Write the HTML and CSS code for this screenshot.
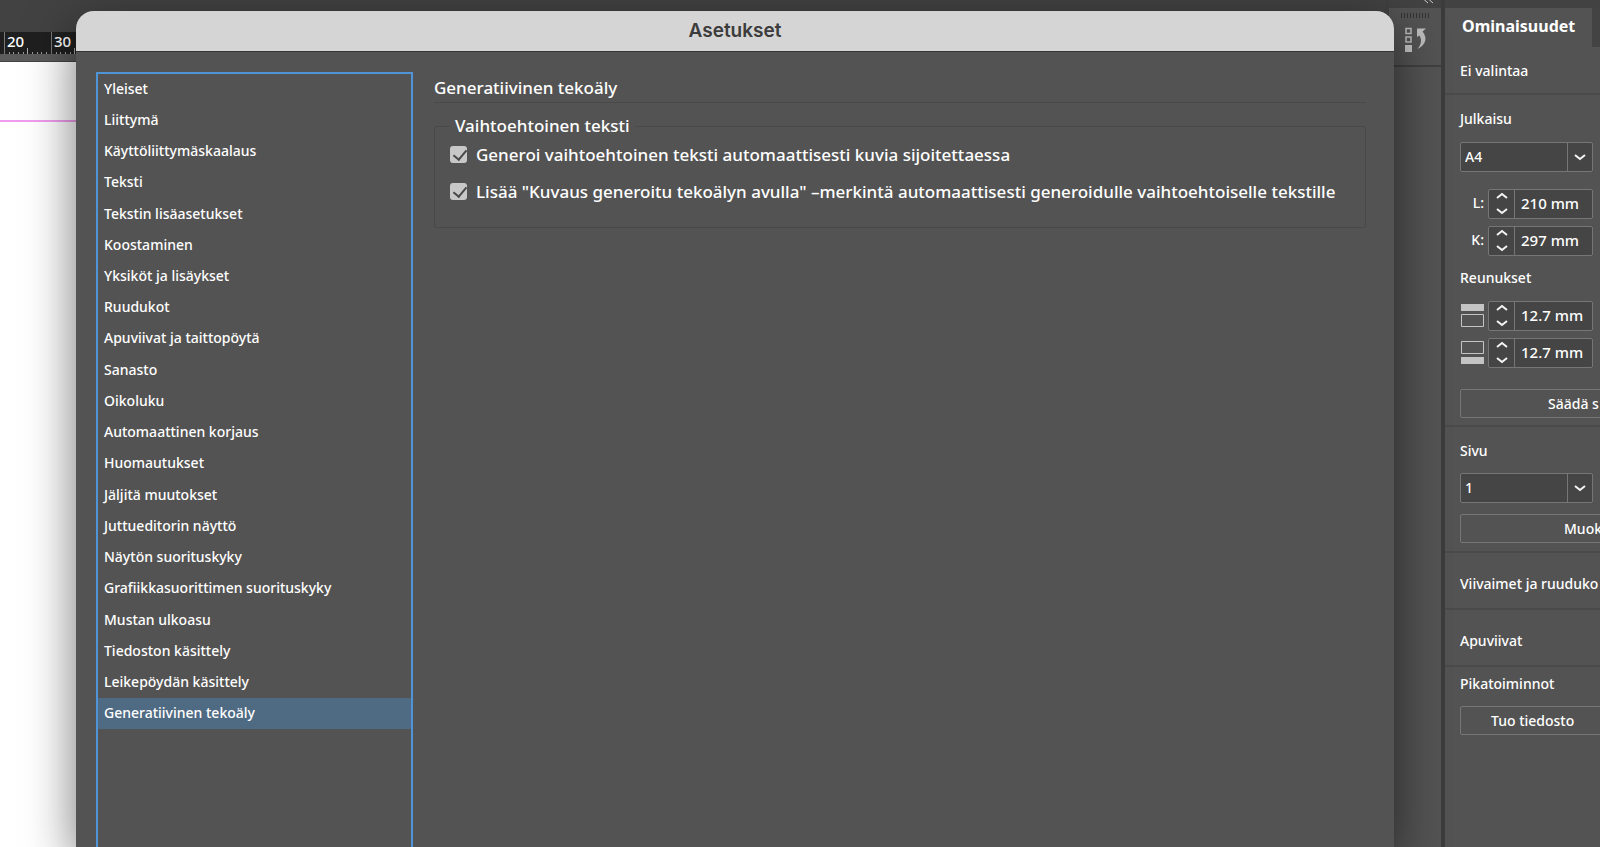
FILE: index.html
```html
<!DOCTYPE html>
<html lang="fi">

<head>
    <meta charset="UTF-8">
    <title>Asetukset</title>
    <link rel="stylesheet" href="styles.css">
</head>

<body>
    <div class="app">
        <!-- document window -->
        <div class="document">
            <div class="toolbar"></div>
            <svg class="ruler" width="100%" height="22">
                <defs>
                    <pattern id="ticks" x="4" width="47" height="22" patternUnits="userSpaceOnUse">
                        <path d="M.5 0V22" stroke="#777"/>
                        <path d="M5.5 20v2M9.5 20v2M14.5 20v2M19.5 20v2M28.5 20v2M33.5 20v2M37.5 20v2M42.5 20v2" stroke="#999"/>
                        <path d="M23.5 16v6" stroke="#aaa"/>
                    </pattern>
                </defs>
                <rect width="100%" height="22" fill="url(#ticks)"/>
                <text x="7" y="15">20</text>
                <text x="54" y="15">30</text>
            </svg>
            <div class="pasteboard"></div>
            <div class="page">
                <div class="margin"></div>
            </div>
        </div>

        <!-- collapsed panel dock -->
        <div class="dock">
            <div class="dock-top">
                <svg width="12" height="8" viewBox="0 0 12 8"><path d="M5-3L1.500 0L5 3M10-3L6.500 0L10 3" fill="none" stroke="#ccc"/></svg>
            </div>
            <div class="dock-head">
                <div class="grip"></div>
                <svg width="24" height="26" viewBox="0 0 24 26">
                    <path d="M2 1.500h5v5H2zM2 10h5v5H2z" fill="none" stroke="#bdbdbd" stroke-width="1.500"/>
                    <path d="M1 18h7v7H1z" fill="#c4c4c4"/>
                    <path d="M13 1.500h9l-3.500 3c5 6 4 13-5 17.500 4-5 4.500-9 2-13.500L13 10z" fill="#bdbdbd"/>
                </svg>
            </div>
        </div>

        <!-- properties panel -->
        <div class="panel">
            <div class="panel-tabs"><span class="tab">Ominaisuudet</span></div>
            <div class="section selection">Ei valintaa</div>
            <div class="section publication">
                <label class="heading" for="size">Julkaisu</label>
                <div class="dropdown">
                    <select id="size"><option>A4</option></select>
                    <svg width="12" height="8" viewBox="0 0 12 8"><path d="M1 2l5 4 5-4"/></svg>
                </div>
                <div class="fields">
                    <div class="field">
                        <label for="w">L:</label>
                        <div class="spin">
                            <svg width="25" height="28" viewBox="0 0 25 28"><path d="M8 8l5-4 5 4M8 19l5 4 5-4"/></svg>
                            <input id="w" type="text" value="210 mm">
                        </div>
                    </div>
                    <div class="field">
                        <label for="h">K:</label>
                        <div class="spin">
                            <svg width="25" height="28" viewBox="0 0 25 28"><path d="M8 8l5-4 5 4M8 19l5 4 5-4"/></svg>
                            <input id="h" type="text" value="297 mm">
                        </div>
                    </div>
                </div>
                <div class="heading">Reunukset</div>
                <div class="fields margins">
                    <div class="field">
                        <label for="mt"><svg width="24" height="24" viewBox="0 0 24 24"><path d="M1 1h23v7H1z" fill="#c4c4c4"/><path d="M1.500 11.500h22v12h-22z" fill="none" stroke="#c4c4c4"/></svg></label>
                        <div class="spin">
                            <svg width="25" height="28" viewBox="0 0 25 28"><path d="M8 8l5-4 5 4M8 19l5 4 5-4"/></svg>
                            <input id="mt" type="text" value="12.7 mm">
                        </div>
                    </div>
                    <div class="field">
                        <label for="mb"><svg width="24" height="24" viewBox="0 0 24 24"><path d="M1.500 1.500h22v12h-22z" fill="none" stroke="#c4c4c4"/><path d="M1 17h23v7H1z" fill="#c4c4c4"/></svg></label>
                        <div class="spin">
                            <svg width="25" height="28" viewBox="0 0 25 28"><path d="M8 8l5-4 5 4M8 19l5 4 5-4"/></svg>
                            <input id="mb" type="text" value="12.7 mm">
                        </div>
                    </div>
                </div>
                <button class="btn adjust">Säädä s</button>
            </div>
            <div class="section pages">
                <label class="heading" for="pg">Sivu</label>
                <div class="dropdown">
                    <select id="pg"><option>1</option></select>
                    <svg width="12" height="8" viewBox="0 0 12 8"><path d="M1 2l5 4 5-4"/></svg>
                </div>
                <button class="btn edit">Muok</button>
            </div>
            <div class="section single">Viivaimet ja ruuduko</div>
            <div class="section single">Apuviivat</div>
            <div class="section quick">
                <div class="heading">Pikatoiminnot</div>
                <button class="btn import">Tuo tiedosto</button>
            </div>
        </div>
    </div>

    <!-- preferences dialog -->
    <div class="dialog">
        <h1 class="titlebar">Asetukset</h1>
        <div class="dialog-body">
            <nav class="sidebar">
                <ul>
                    <li><a href="#">Yleiset</a></li>
                    <li><a href="#">Liittymä</a></li>
                    <li><a href="#">Käyttöliittymäskaalaus</a></li>
                    <li><a href="#">Teksti</a></li>
                    <li><a href="#">Tekstin lisäasetukset</a></li>
                    <li><a href="#">Koostaminen</a></li>
                    <li><a href="#">Yksiköt ja lisäykset</a></li>
                    <li><a href="#">Ruudukot</a></li>
                    <li><a href="#">Apuviivat ja taittopöytä</a></li>
                    <li><a href="#">Sanasto</a></li>
                    <li><a href="#">Oikoluku</a></li>
                    <li><a href="#">Automaattinen korjaus</a></li>
                    <li><a href="#">Huomautukset</a></li>
                    <li><a href="#">Jäljitä muutokset</a></li>
                    <li><a href="#">Juttueditorin näyttö</a></li>
                    <li><a href="#">Näytön suorituskyky</a></li>
                    <li><a href="#">Grafiikkasuorittimen suorituskyky</a></li>
                    <li><a href="#">Mustan ulkoasu</a></li>
                    <li><a href="#">Tiedoston käsittely</a></li>
                    <li><a href="#">Leikepöydän käsittely</a></li>
                    <li class="active"><a href="#">Generatiivinen tekoäly</a></li>
                </ul>
            </nav>
            <div class="content">
                <h2>Generatiivinen tekoäly</h2>
                <fieldset>
                    <legend>Vaihtoehtoinen teksti</legend>
                    <label class="check">
                        <input type="checkbox" checked>
                        <span>Generoi vaihtoehtoinen teksti automaattisesti kuvia sijoitettaessa</span>
                    </label>
                    <label class="check">
                        <input type="checkbox" checked>
                        <span>Lisää "Kuvaus generoitu tekoälyn avulla" –merkintä automaattisesti generoidulle vaihtoehtoiselle tekstille</span>
                    </label>
                </fieldset>
            </div>
        </div>
    </div>
</body>

</html>
```

FILE: styles.css
```css
* {
    box-sizing: border-box;
}

body {
    margin: 0;
    height: 100vh;
    overflow: hidden;
    position: relative;
    background: #535353;
    color: #fff;
    font: 500 14px/20px "Noto Sans", "Open Sans", sans-serif;
}

svg {
    display: block;
    flex: none;
}

h1, h2, ul, fieldset {
    margin: 0;
    padding: 0;
}

.app {
    display: grid;
    grid-template-columns: 1fr 60px 155px;
    height: 100%;
}

/* document */
.document {
    display: flex;
    flex-direction: column;
}

.toolbar {
    height: 32px;
    background: #424242;
}

.ruler {
    background: #1f1f1f;
}

.ruler text {
    fill: #fff;
    font-size: 15px;
}

.pasteboard {
    height: 8px;
    background: #5c5c5c;
    border-bottom: 1px solid #444;
}

.page {
    flex: 1;
    padding-top: 58px;
    background: #fff;
}

.margin {
    height: 100%;
    border-top: 2px solid #f29cf0;
}

/* dock */
.dock {
    border-left: 4px solid #404040;
    border-right: 4px solid #3c3c3c;
    background: #535353;
}

.dock-top {
    height: 8px;
    padding-left: 34px;
    background: #424242;
}

.dock-head {
    height: 59px;
    padding: 5px 0 0 12px;
    border-bottom: 2px solid #404040;
}

.grip {
    width: 28px;
    height: 5px;
    margin-bottom: 9px;
    background: repeating-linear-gradient(90deg, #333 0 1px, #535353 1px 3px);
}

.dock-head svg {
    margin-left: 3px;
}

/* properties panel */
.panel {
    overflow: hidden;
    border-top: 8px solid #424242;
    white-space: nowrap;
}

.panel-tabs {
    height: 39px;
    padding-right: 8px;
    background: linear-gradient(#434343, #434343) right / 8px 100% no-repeat;
}

.tab {
    display: block;
    padding: 8px 0 0 17px;
    font-size: 16px;
    font-weight: 700;
}

.section {
    padding-left: 15px;
    border-bottom: 2px solid #4a4a4a;
}

.selection {
    height: 48px;
    padding-top: 14px;
}

.publication {
    height: 332px;
    padding-top: 14px;
}

.heading {
    display: block;
    height: 20px;
}

.dropdown {
    display: flex;
    align-items: center;
    width: 133px;
    height: 30px;
    margin-top: 13px;
    padding-right: 6px;
    border: 1px solid #767676;
    border-radius: 2px;
    background: #454545;
}

.dropdown select {
    flex: 1;
    height: 100%;
    margin-right: 6px;
    padding: 0 4px;
    border: 0;
    border-right: 1px solid #767676;
    appearance: none;
    background: none;
    color: #fff;
    font: inherit;
}

.dropdown path,
.spin path {
    fill: none;
    stroke: #f4f4f4;
    stroke-width: 2;
}

.fields {
    display: grid;
    gap: 7px;
    padding: 17px 0 12px;
}

.margins {
    padding: 13px 0 21px;
}

.field {
    display: grid;
    grid-template-columns: 24px 105px;
    gap: 4px;
    align-items: center;
}

.field label {
    justify-self: end;
    padding-bottom: 2px;
}

.spin {
    display: flex;
    height: 30px;
    border: 1px solid #767676;
    border-radius: 2px;
    background: #454545;
}

.spin input {
    width: 78px;
    padding: 0 6px 2px;
    border: 0;
    border-left: 1px solid #767676;
    background: none;
    color: #fff;
    font: inherit;
    font-size: 15px;
}

.btn {
    display: block;
    width: 180px;
    height: 29px;
    padding: 0;
    border: 1px solid #767676;
    border-radius: 2px;
    background: none;
    color: #fff;
    font: inherit;
    text-align: left;
}

.adjust {
    padding-left: 87px;
}

.pages {
    height: 126px;
    padding-top: 14px;
}

.pages .dropdown {
    margin: 12px 0 11px;
}

.edit {
    padding-left: 103px;
}

.single {
    height: 57px;
    padding-top: 21px;
}

.quick {
    padding-top: 7px;
    border: 0;
}

.import {
    margin-top: 12px;
    padding-left: 30px;
}

/* dialog */
.dialog {
    position: absolute;
    top: 11px;
    right: 206px;
    bottom: 0;
    left: 76px;
    display: flex;
    flex-direction: column;
    border-radius: 18px 18px 0 0;
    background: #535353;
    box-shadow: 0 16px 50px rgba(0, 0, 0, .55);
}

.titlebar {
    height: 41px;
    border-bottom: 1px solid #333;
    border-radius: 18px 18px 0 0;
    background: #d5d5d5;
    color: #3c3c3c;
    font: 600 19px/39px Inter, sans-serif;
    text-align: center;
}

.dialog-body {
    flex: 1;
    display: grid;
    grid-template-columns: 317px 1fr;
    gap: 21px;
    padding: 20px 28px 0 20px;
}

.sidebar {
    border: 2px solid #4f94d6;
    border-bottom: 0;
}

.sidebar ul {
    display: flex;
    flex-direction: column;
    height: 656px;
    margin-top: -1px;
    list-style: none;
}

.sidebar li {
    flex: 1;
    display: flex;
    align-items: center;
    padding-left: 6px;
}

.sidebar a {
    color: #fff;
    text-decoration: none;
}

.sidebar .active {
    background: #4f6a83;
}

.content h2 {
    height: 31px;
    padding-top: 4px;
    border-bottom: 1px solid #4a4a4a;
    font-size: 17px;
    font-weight: 500;
    line-height: 24px;
}

fieldset {
    height: 114px;
    margin-top: 11px;
    padding: 0 0 0 15px;
    border: 1px solid #494949;
    border-radius: 2px;
    font-size: 17px;
}

legend {
    padding: 0 5px;
    line-height: 24px;
}

.check {
    display: flex;
    align-items: center;
    gap: 9px;
    height: 37px;
    white-space: nowrap;
}

.check:first-of-type {
    margin-top: -2px;
}

.check input {
    appearance: none;
    width: 17px;
    height: 17px;
    margin: 0;
    border-radius: 3px;
    background: #c8c8c8;
}

.check input:checked::before {
    content: "";
    display: block;
    width: 6px;
    height: 11px;
    margin: 2px 0 0 6px;
    border: solid #484848;
    border-width: 0 2px 2px 0;
    transform: translateY(-1px) rotate(40deg);
}
```
